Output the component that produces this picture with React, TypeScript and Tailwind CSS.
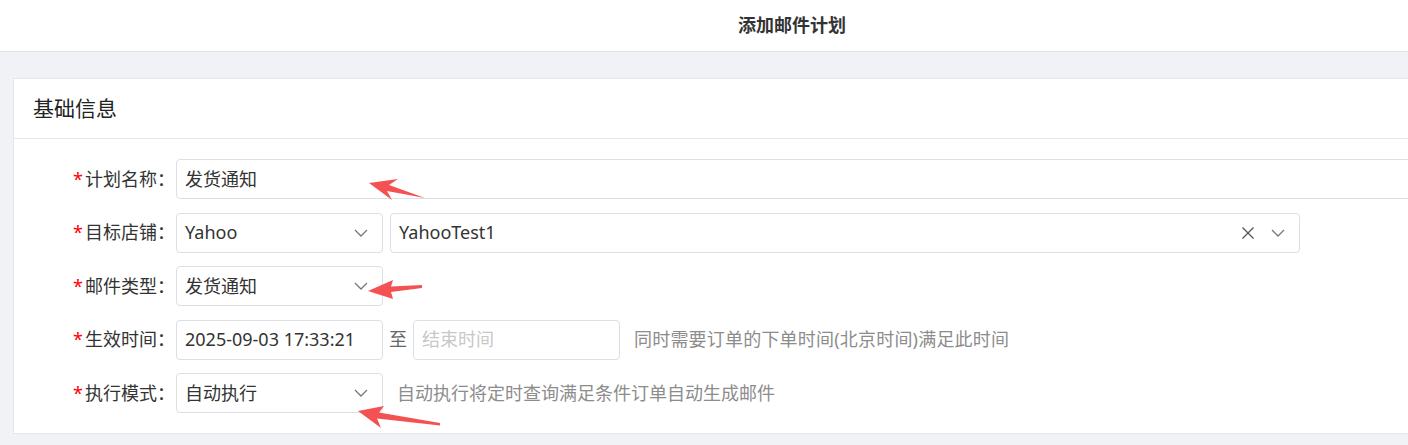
import { ReactNode } from 'react'

const font = { fontFamily: '"Noto Sans", "Noto Sans CJK SC", sans-serif' }

const Chevron = () => (
  <svg width="14" height="8" viewBox="0 0 14 8" className="shrink-0">
    <polyline points="1,1 7,7 13,1" fill="none" stroke="#777" strokeWidth="1.3" />
  </svg>
)

const Clear = () => (
  <svg width="14" height="14" viewBox="0 0 14 14" className="shrink-0">
    <path d="M1.5 1.5 L12.5 12.5 M12.5 1.5 L1.5 12.5" stroke="#555" strokeWidth="1.3" />
  </svg>
)

const Row = ({ label, children }: { label: string; children: ReactNode }) => (
  <div className="flex h-[40px] items-center">
    <label className="w-[162px] shrink-0 pr-[1px] text-right text-[18px] text-[#333]">
      <span className="mr-[2px] text-[#f00]">*</span>
      {label}：
    </label>
    {children}
  </div>
)

const Select = ({ value, className, clearable }: { value: string; className: string; clearable?: boolean }) => (
  <div className={`flex h-[40px] items-center rounded-[4px] border border-[#dcdfe6] bg-white pl-[8px] pr-[14px] ${className}`}>
    <span className="flex-1 text-[18px] text-[#333]">{value}</span>
    {clearable && (
      <span className="mr-[16px]">
        <Clear />
      </span>
    )}
    <Chevron />
  </div>
)

export default function App() {
  return (
    <div className="relative h-[445px] w-[1408px] overflow-hidden bg-[#f0f2f5]" style={font}>
      <div className="w-[1584px]">
        <header className="flex h-[52px] items-center justify-center border-b border-[#e4e4e4] bg-white">
          <h1 className="text-[18px] font-bold text-[#333]">添加邮件计划</h1>
        </header>

        <div className="px-[13px] pt-[26px]">
          <section className="border border-[#e6e6e6] bg-white">
            <div className="flex h-[60px] items-center border-b border-[#e6e6e6] pl-[19px]">
              <h2 className="text-[21px] text-[#222]">基础信息</h2>
            </div>

            <div className="flex flex-col gap-[13.5px] pb-[20px] pt-[20px]">
              <Row label="计划名称">
                <div className="flex h-[40px] w-[1330px] items-center rounded-[4px] border border-[#dcdfe6] px-[8px] text-[18px] text-[#333]">
                  发货通知
                </div>
              </Row>

              <Row label="目标店铺">
                <Select value="Yahoo" className="w-[207px]" />
                <Select value="YahooTest1" className="ml-[7px] w-[910px]" clearable />
              </Row>

              <Row label="邮件类型">
                <Select value="发货通知" className="w-[207px]" />
              </Row>

              <Row label="生效时间">
                <div className="flex h-[40px] w-[207px] items-center rounded-[4px] border border-[#dcdfe6] px-[8px] text-[18px] text-[#333]">
                  2025-09-03 17:33:21
                </div>
                <span className="ml-[6px] mr-[6px] text-[18px] text-[#666]">至</span>
                <div className="flex h-[40px] w-[207px] items-center rounded-[4px] border border-[#dcdfe6] px-[8px] text-[18px] text-[#c8c8c8]">
                  结束时间
                </div>
                <span className="ml-[14px] text-[18px] tracking-[0.2px] text-[#8c8c8c]">同时需要订单的下单时间(北京时间)满足此时间</span>
              </Row>

              <Row label="执行模式">
                <Select value="自动执行" className="w-[207px]" />
                <span className="ml-[14px] text-[18px] text-[#8c8c8c]">自动执行将定时查询满足条件订单自动生成邮件</span>
              </Row>
            </div>
          </section>
        </div>
      </div>

      <svg className="pointer-events-none absolute left-0 top-0" width="1408" height="445" viewBox="0 0 1408 445">
        <polygon fill="#f45252" points="369,183 398,179 389,185 425,198 387,191 392,200" />
        <polygon fill="#f45252" points="368,291 393,280 391,286.5 422,285 422,288 391,292 393,299" />
        <polygon fill="#f45252" points="358,411 384,406 379,412.5 440,423 440,425.5 377,418.5 381,428" />
      </svg>
    </div>
  )
}
